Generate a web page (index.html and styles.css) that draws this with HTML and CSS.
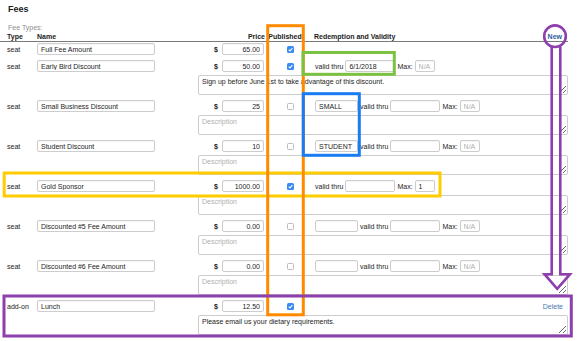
FILE: index.html
```html
<!DOCTYPE html>
<html lang="en">
<head>
    <meta charset="UTF-8">
    <title>Fees</title>
    <link rel="stylesheet" href="styles.css">
</head>
<body>
    <div id="wrap">
        <h2 class="title">Fees</h2>
        <div class="subtitle">Fee Types:</div>

        <div class="head">
            <div>Type</div>
            <div>Name</div>
            <div class="h-price">Price</div>
            <div class="h-pub">Published</div>
            <div class="h-red">Redemption and Validity <a class="new">New</a></div>
        </div>

        <div class="fee nodesc">
            <div class="cell">seat</div>
            <div class="cell"><input class="name" value="Full Fee Amount"></div>
            <div class="cell price"><b>$</b><input class="amt" value="65.00"></div>
            <div class="cell pub"><span class="cb on"><svg viewBox="0 0 7 7"><path d="M1.7 3.7 L3 5 L5.4 2.1"/></svg></span></div>
            <div class="cell red"></div>
        </div>

        <div class="fee">
            <div class="cell">seat</div>
            <div class="cell"><input class="name" value="Early Bird Discount"></div>
            <div class="cell price"><b>$</b><input class="amt" value="50.00"></div>
            <div class="cell pub"><span class="cb on"><svg viewBox="0 0 7 7"><path d="M1.7 3.7 L3 5 L5.4 2.1"/></svg></span></div>
            <div class="cell red"><span class="lbl">valid thru</span><input class="date" value="6/1/2018"><span class="lbl max">Max:</span><input class="qty" placeholder="N/A"></div>
            <textarea class="desc" placeholder="Description">Sign up before June 1st to take advantage of this discount.</textarea>
        </div>

        <div class="fee">
            <div class="cell">seat</div>
            <div class="cell"><input class="name" value="Small Business Discount"></div>
            <div class="cell price"><b>$</b><input class="amt" value="25"></div>
            <div class="cell pub"><span class="cb"></span></div>
            <div class="cell red"><input class="code" value="SMALL"><span class="lbl">valid thru</span><input class="date"><span class="lbl max">Max:</span><input class="qty" placeholder="N/A"></div>
            <textarea class="desc" placeholder="Description"></textarea>
        </div>

        <div class="fee">
            <div class="cell">seat</div>
            <div class="cell"><input class="name" value="Student Discount"></div>
            <div class="cell price"><b>$</b><input class="amt" value="10"></div>
            <div class="cell pub"><span class="cb"></span></div>
            <div class="cell red"><input class="code" value="STUDENT"><span class="lbl">valid thru</span><input class="date"><span class="lbl max">Max:</span><input class="qty" placeholder="N/A"></div>
            <textarea class="desc" placeholder="Description"></textarea>
        </div>

        <div class="fee">
            <div class="cell">seat</div>
            <div class="cell"><input class="name" value="Gold Sponsor"></div>
            <div class="cell price"><b>$</b><input class="amt" value="1000.00"></div>
            <div class="cell pub"><span class="cb on"><svg viewBox="0 0 7 7"><path d="M1.7 3.7 L3 5 L5.4 2.1"/></svg></span></div>
            <div class="cell red"><span class="lbl">valid thru</span><input class="date"><span class="lbl max">Max:</span><input class="qty" value="1"></div>
            <textarea class="desc" placeholder="Description"></textarea>
        </div>

        <div class="fee">
            <div class="cell">seat</div>
            <div class="cell"><input class="name" value="Discounted #5 Fee Amount"></div>
            <div class="cell price"><b>$</b><input class="amt" value="0.00"></div>
            <div class="cell pub"><span class="cb"></span></div>
            <div class="cell red"><input class="code"><span class="lbl">valid thru</span><input class="date"><span class="lbl max">Max:</span><input class="qty" placeholder="N/A"></div>
            <textarea class="desc" placeholder="Description"></textarea>
        </div>

        <div class="fee">
            <div class="cell">seat</div>
            <div class="cell"><input class="name" value="Discounted #6 Fee Amount"></div>
            <div class="cell price"><b>$</b><input class="amt" value="0.00"></div>
            <div class="cell pub"><span class="cb"></span></div>
            <div class="cell red"><input class="code"><span class="lbl">valid thru</span><input class="date"><span class="lbl max">Max:</span><input class="qty" placeholder="N/A"></div>
            <textarea class="desc" placeholder="Description"></textarea>
        </div>

        <div class="fee">
            <div class="cell">add-on</div>
            <div class="cell"><input class="name" value="Lunch"></div>
            <div class="cell price"><b>$</b><input class="amt" value="12.50"></div>
            <div class="cell pub"><span class="cb on"><svg viewBox="0 0 7 7"><path d="M1.7 3.7 L3 5 L5.4 2.1"/></svg></span></div>
            <div class="cell red end"><a class="delete">Delete</a></div>
            <textarea class="desc" placeholder="Description">Please email us your dietary requirements.</textarea>
        </div>

        <!-- annotation marks drawn over the form -->
        <svg class="marks" width="577" height="341" viewBox="0 0 577 341">
            <rect class="m-yellow" x="4.2" y="173" width="435.8" height="23"/>
            <rect class="m-orange" x="267.7" y="25.7" width="35.6" height="289.1"/>
            <rect class="m-green" x="303" y="52.5" width="91.3" height="21.8"/>
            <rect class="m-blue" x="303.3" y="93.7" width="56" height="61.6"/>
            <rect class="m-purple" x="4" y="296" width="567.3" height="40"/>
            <circle class="m-purple" cx="555" cy="36.2" r="10.8"/>
            <path class="m-purple" d="M551.7 46.5 V274.2 H544.5 L557.2 288.8 L570 274.2 H560.3 V46.5"/>
        </svg>
    </div>
</body>
</html>
```

FILE: styles.css
```css
body{
    margin: 0;
    background: #fff;
    font-family: "Liberation Sans", Arial, sans-serif;
    color: #1c1c1c;
    font-size: 7px;
}
#wrap{
    width: 577px;
    height: 341px;
    position: relative;
    overflow: hidden;
}
.title{
    margin: 0;
    padding: 3px 0 0 8px;
    font-size: 9px;
    line-height: 12px;
}
.subtitle{
    margin-top: 9px;
    padding-left: 8px;
    line-height: 8px;
    color: #8e8e8e;
}
.head,
.fee{
    width: 568px;
    box-sizing: border-box;
    padding-left: 7px;
    display: grid;
    grid-template-columns: 30px 161px 67px 40px 1fr;
}
.head{
    height: 10px;
    line-height: 9px;
    font-weight: bold;
    border-bottom: 1px solid #7a7a7a;
}
.h-price{
    text-align: right;
}
.h-pub{
    text-align: center;
}
.h-red{
    padding-left: 9px;
    display: flex;
    justify-content: space-between;
    padding-right: 6px;
}
.new{
    color: #2d5e9c;
}
.fee{
    row-gap: 2px;
    margin-bottom: 4px;
}
.fee.nodesc{
    margin-bottom: 3px;
}
.cell{
    height: 14px;
    display: flex;
    align-items: center;
}
input{
    height: 12px;
    box-sizing: border-box;
    margin: 0;
    padding: 0 3px;
    border: 1px solid #cdcdcd;
    border-radius: 2px;
    box-shadow: inset 0 1px 1px rgba(0,0,0,.04);
    font-family: inherit;
    font-size: 7px;
    color: #1c1c1c;
    outline: none;
}
input::placeholder,
textarea::placeholder{
    color: #b0b0b0;
}
.name{
    width: 118px;
}
.price{
    justify-content: flex-end;
    padding-right: 1px;
}
.price b{
    margin-right: 4px;
}
.amt{
    width: 42px;
    text-align: right;
}
.pub{
    padding-left: 22px;
}
.cb{
    width: 7px;
    height: 7px;
    box-sizing: border-box;
    border: 1px solid #bcbcbc;
    border-radius: 1.5px;
    background: #fff;
    display: block;
}
.cb.on{
    border: none;
    background: #3a8af6;
}
.cb svg{
    display: block;
    width: 7px;
    height: 7px;
}
.cb path{
    fill: none;
    stroke: #fff;
    stroke-width: 1.1;
}
.red{
    padding-left: 10px;
}
.red.end{
    justify-content: flex-end;
    padding-right: 5px;
}
.code{
    width: 43px;
    margin-right: 2px;
}
.lbl{
    margin-right: 2px;
}
.max{
    margin-left: 2px;
}
.date{
    width: 50px;
}
.qty{
    width: 20px;
}
.delete{
    color: #4a78b2;
}
.desc{
    grid-column: 3 / 6;
    height: 20px;
    box-sizing: border-box;
    margin: 0;
    padding: 2px 3px;
    border: 1px solid #cdcdcd;
    border-radius: 2px;
    font-family: inherit;
    font-size: 7px;
    color: #1c1c1c;
    outline: none;
}
.marks{
    position: absolute;
    left: 0;
    top: 0;
    pointer-events: none;
}
.marks rect,
.marks circle,
.marks path{
    fill: none;
    stroke-width: 3;
}
.m-yellow{
    stroke: #ffcc00;
}
.m-orange{
    stroke: #ff8a00;
}
.m-green{
    stroke: #7cc242;
}
.m-blue{
    stroke: #1a7cf2;
}
.m-purple{
    stroke: #8d3fae;
}
.marks path.m-purple,
.marks circle.m-purple{
    stroke-width: 2.6;
}
```
